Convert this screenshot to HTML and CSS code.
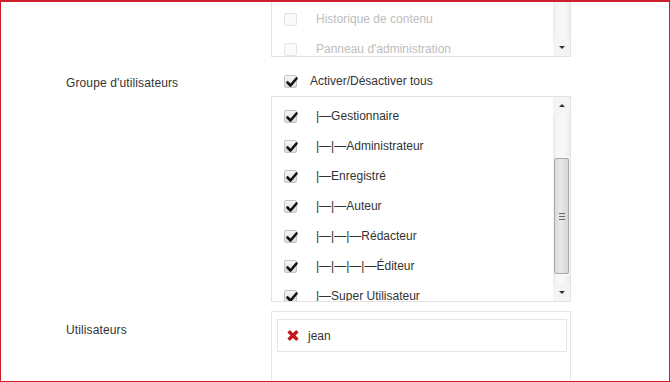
FILE: index.html
```html
<!DOCTYPE html>
<html lang="fr">
<head>
    <meta charset="UTF-8">
    <title>Groupe d'utilisateurs</title>
    <link rel="stylesheet" href="styles.css">
</head>
<body>
    <div class="frame">
        <!-- permissions list, scrolled to its end -->
        <div class="row row-top">
            <div class="label"></div>
            <div class="listbox listbox-top">
                <ul class="items disabled">
                    <li><span class="check"></span><span class="text">Historique de contenu</span></li>
                    <li><span class="check"></span><span class="text">Panneau d'administration</span></li>
                </ul>
                <div class="scrollbar">
                    <div class="track"></div>
                    <div class="arrow down"></div>
                </div>
            </div>
        </div>

        <div class="row row-toggle">
            <div class="label">Groupe d'utilisateurs</div>
            <div class="toggle-all">
                <span class="check checked"><svg viewBox="0 0 14 14"><polyline points="2.5,7.5 5.5,10.5 11.5,3.5"/></svg></span>
                <span class="text">Activer/Désactiver tous</span>
            </div>
        </div>

        <div class="row row-groups">
            <div class="label"></div>
            <div class="listbox listbox-groups">
                <ul class="items">
                    <li><span class="check checked"><svg viewBox="0 0 14 14"><polyline points="2.5,7.5 5.5,10.5 11.5,3.5"/></svg></span><span class="text">|—Gestionnaire</span></li>
                    <li><span class="check checked"><svg viewBox="0 0 14 14"><polyline points="2.5,7.5 5.5,10.5 11.5,3.5"/></svg></span><span class="text">|—|—Administrateur</span></li>
                    <li><span class="check checked"><svg viewBox="0 0 14 14"><polyline points="2.5,7.5 5.5,10.5 11.5,3.5"/></svg></span><span class="text">|—Enregistré</span></li>
                    <li><span class="check checked"><svg viewBox="0 0 14 14"><polyline points="2.5,7.5 5.5,10.5 11.5,3.5"/></svg></span><span class="text">|—|—Auteur</span></li>
                    <li><span class="check checked"><svg viewBox="0 0 14 14"><polyline points="2.5,7.5 5.5,10.5 11.5,3.5"/></svg></span><span class="text">|—|—|—Rédacteur</span></li>
                    <li><span class="check checked"><svg viewBox="0 0 14 14"><polyline points="2.5,7.5 5.5,10.5 11.5,3.5"/></svg></span><span class="text">|—|—|—|—Éditeur</span></li>
                    <li><span class="check checked"><svg viewBox="0 0 14 14"><polyline points="2.5,7.5 5.5,10.5 11.5,3.5"/></svg></span><span class="text">|—Super Utilisateur</span></li>
                </ul>
                <div class="scrollbar">
                    <div class="arrow up"></div>
                    <div class="track track-before"></div>
                    <div class="thumb"><span class="grip"></span></div>
                    <div class="track"></div>
                    <div class="arrow down"></div>
                </div>
            </div>
        </div>

        <div class="row row-users">
            <div class="label">Utilisateurs</div>
            <div class="users-box">
                <div class="user-tag">
                    <svg class="remove" viewBox="0 0 14 13">
                        <path d="M2.6 2.2 L11.4 10.8 M11.4 2.2 L2.6 10.8"/>
                    </svg>
                    <span>jean</span>
                </div>
            </div>
        </div>
    </div>
</body>
</html>
```

FILE: styles.css
```css
body {
    margin: 0;
    font-family: "Liberation Sans", Arial, sans-serif;
    font-size: 12px;
    color: #333;
    background-color: #fff;
}

.frame {
    box-sizing: border-box;
    width: 670px;
    height: 382px;
    border: 1px solid #cc1f2b;
    border-top-width: 2px;
    padding-left: 65px;
    overflow: hidden;
}

.row {
    display: flex;
}

.label {
    width: 205px;
    flex: none;
    line-height: 18px;
    letter-spacing: 0.12px;
}

/* list boxes */
.listbox {
    box-sizing: border-box;
    width: 300px;
    border: 1px solid #e3e3e3;
    display: flex;
    overflow: hidden;
}

.listbox-top {
    height: 55px;
    border-top: none;
}

.listbox-groups {
    height: 206px;
}

.items {
    list-style: none;
    margin: 0;
    padding: 4px 0 0 12px;
    flex: 1;
}

.listbox-top .items {
    padding-top: 2px;
}

.items li {
    height: 30px;
    display: flex;
    align-items: center;
    white-space: nowrap;
}

.items .text {
    margin-left: 19px;
}

.items.disabled .text {
    color: #bdbdbd;
}

.items.disabled .check {
    border-color: #e4e4e4;
    background: #fafafa;
}

/* checkboxes */
.check {
    box-sizing: border-box;
    width: 13px;
    height: 13px;
    flex: none;
    border: 1px solid #c4c4c4;
    border-radius: 2px;
    background: linear-gradient(#f6f6f6, #dcdcdc);
    position: relative;
}

.check svg {
    position: absolute;
    left: 0;
    top: -1px;
    width: 14px;
    height: 14px;
    fill: none;
    stroke: #111;
    stroke-width: 2.6;
    stroke-linecap: round;
    stroke-linejoin: round;
}

.row-toggle {
    height: 39px;
}

.row-toggle .label {
    padding-top: 17px;
}

.toggle-all {
    display: flex;
    align-items: center;
    height: 18px;
    margin-top: 15px;
    padding-left: 13px;
}

.toggle-all .text {
    margin-left: 13px;
}

/* fake scrollbar */
.scrollbar {
    width: 17px;
    flex: none;
    display: flex;
    flex-direction: column;
    background-color: #f4f4f4;
}

.track {
    flex: 1;
    background: linear-gradient(to right, #ececec, #f7f7f7 30%, #f7f7f7 70%, #ececec);
}

.track-before {
    flex: none;
    height: 44px;
}

.arrow {
    height: 17px;
    flex: none;
    display: flex;
    align-items: center;
    justify-content: center;
    background-color: #f4f4f4;
}

.arrow::after {
    content: "";
    width: 0;
    height: 0;
    border-left: 3px solid transparent;
    border-right: 3px solid transparent;
}

.arrow.down::after {
    border-top: 3px solid #333;
}

.arrow.up::after {
    border-bottom: 3px solid #333;
}

.thumb {
    box-sizing: border-box;
    height: 116px;
    margin: 0 1px;
    border: 1px solid #a9a9a9;
    border-radius: 2px;
    background: linear-gradient(to right, #dadada, #e9e9e9 40%, #d6d6d6);
    display: flex;
    align-items: center;
    justify-content: center;
}

.grip {
    width: 6px;
    height: 5px;
    border-top: 1px solid #666;
    border-bottom: 1px solid #666;
    position: relative;
}

.grip::after {
    content: "";
    position: absolute;
    left: 0;
    right: 0;
    top: 2px;
    border-top: 1px solid #666;
}

/* users */
.row-users {
    margin-top: 9px;
}

.row-users .label {
    padding-top: 10px;
}

.users-box {
    box-sizing: border-box;
    width: 300px;
    height: 120px;
    border: 1px solid #e6e6e6;
    padding: 7px 3px 0 5px;
}

.user-tag {
    box-sizing: border-box;
    height: 33px;
    border: 1px solid #e6e6e6;
    display: flex;
    align-items: center;
    padding-left: 8px;
}

.remove {
    width: 14px;
    height: 13px;
    fill: none;
    stroke: #c0171b;
    stroke-width: 3.4;
    margin-right: 8px;
}
```
